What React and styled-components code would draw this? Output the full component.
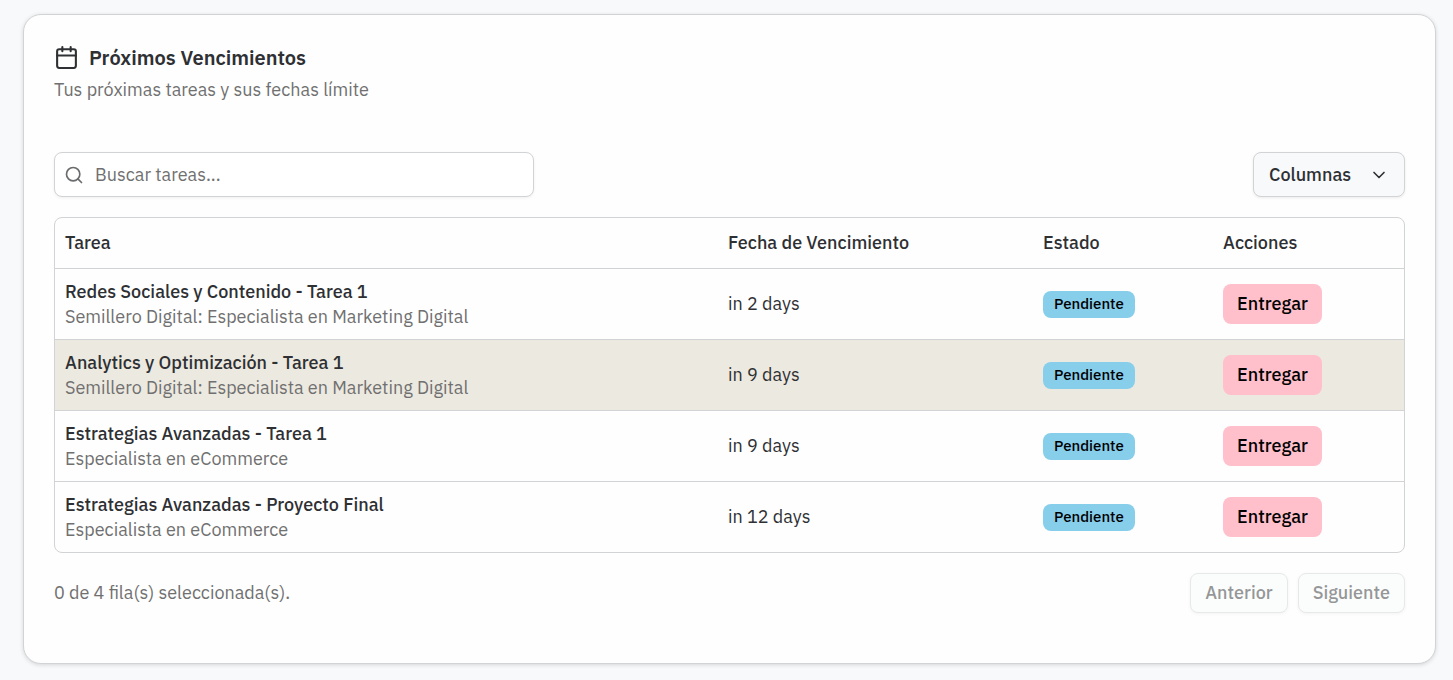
import React, { useState } from "react";
import styled, { createGlobalStyle, css } from "styled-components";
import { Calendar, ChevronDown, Search } from "lucide-react";

const GlobalStyle = createGlobalStyle`
  *, *::before, *::after { box-sizing: border-box; }
  body {
    margin: 0;
    background: #f8f9fb;
    color: #2e3033;
    font-family: "IBM Plex Sans", Roboto, "Liberation Sans", sans-serif;
    font-size: 18px;
    line-height: 24px;
  }
  button, input { font: inherit; color: inherit; }
`;

const Page = styled.main`
  padding: 14px 17px 16px 23px;
`;

const Card = styled.section`
  padding: 30px 30px 50px;
  background: #fefefe;
  border: 1px solid #d1d3d4;
  border-radius: 18px;
  box-shadow: 0 1px 4px rgba(0, 0, 0, 0.14);
`;

const CardHeader = styled.header`
  display: grid;
  gap: 8px;
  margin-bottom: 50px;
`;

const CardTitle = styled.h2`
  display: flex;
  align-items: center;
  gap: 10px;
  margin: 0;
  font-size: 20px;
  font-weight: 600;
`;

const Description = styled.p`
  margin: 0;
  color: #707070;
`;

const Toolbar = styled.div`
  display: flex;
  align-items: center;
  justify-content: space-between;
  gap: 20px;
  margin-bottom: 20px;
`;

const SearchField = styled.label`
  display: flex;
  align-items: center;
  gap: 11px;
  flex: 0 1 480px;
  height: 45px;
  padding: 0 10px 0 9px;
  background: #fff;
  color: #6a6b6d;
  border: 1px solid #d1d3d4;
  border-radius: 8px;
  box-shadow: 0 1px 3px rgba(0, 0, 0, 0.06);
`;

const SearchInput = styled.input`
  flex: 1;
  min-width: 0;
  padding: 0;
  border: 0;
  outline: none;
  background: transparent;
  color: #2e3033;
  &::placeholder { color: #707070; opacity: 1; }
`;

const Button = styled.button`
  display: inline-flex;
  align-items: center;
  justify-content: center;
  height: 40px;
  padding: 0 14px;
  border: 1px solid #d1d3d4;
  border-radius: 8px;
  background: #f8f9fb;
  box-shadow: 0 1px 3px rgba(0, 0, 0, 0.08);
  font-weight: 500;
  white-space: nowrap;
  &:disabled { opacity: 0.5; }
  ${({ $variant }) => $variant === "menu" && css`
    justify-content: space-between;
    width: 152px;
    height: 45px;
    padding: 0 15px;
  `}
  ${({ $variant }) => $variant === "submit" && css`
    width: 99px;
    padding: 0;
    border: 0;
    background: #ffc0cb;
    color: #000;
    box-shadow: none;
  `}
  ${({ $variant }) => $variant === "page" && css`
    background: #fafcfb;
  `}
`;

const TableFrame = styled.div`
  overflow: hidden;
  border: 1px solid #d1d3d4;
  border-radius: 8px;
`;

const Table = styled.table`
  width: 100%;
  table-layout: fixed;
  border-collapse: separate;
  border-spacing: 0;
`;

const Column = styled.col`
  width: ${({ $width }) => $width};
`;

const HeadCell = styled.th`
  height: 51px;
  padding: 0 10px;
  border-bottom: 1px solid #d1d3d4;
  text-align: left;
  font-weight: 500;
`;

const Row = styled.tr`
  background: ${({ $active }) => ($active ? "#ece9e0" : "transparent")};
  &:last-child td { border-bottom: 0; height: 70px; }
`;

const Cell = styled.td`
  height: 71px;
  padding: 0 10px;
  border-bottom: 1px solid #d1d3d4;
  vertical-align: middle;
`;

const TaskName = styled.div`
  font-weight: 500;
  line-height: 25px;
`;

const Course = styled.div`
  color: #707070;
  line-height: 25px;
`;

const Badge = styled.span`
  display: flex;
  align-items: center;
  justify-content: center;
  width: 92px;
  height: 27px;
  border-radius: 8px;
  background: #87ceeb;
  color: #000;
  font-size: 15px;
  font-weight: 500;
`;

const Footer = styled.footer`
  display: flex;
  align-items: center;
  justify-content: space-between;
  margin-top: 20px;
  color: #707070;
`;

const Pager = styled.nav`
  display: flex;
  gap: 10px;
  color: #2e3033;
`;

const tasks = [
  { name: "Redes Sociales y Contenido - Tarea 1", course: "Semillero Digital: Especialista en Marketing Digital", due: "in 2 days" },
  { name: "Analytics y Optimización - Tarea 1", course: "Semillero Digital: Especialista en Marketing Digital", due: "in 9 days", active: true },
  { name: "Estrategias Avanzadas - Tarea 1", course: "Especialista en eCommerce", due: "in 9 days" },
  { name: "Estrategias Avanzadas - Proyecto Final", course: "Especialista en eCommerce", due: "in 12 days" },
];

export default function App() {
  const [query, setQuery] = useState("");
  const visible = tasks.filter((t) => t.name.toLowerCase().includes(query.toLowerCase()));

  return (
    <>
      <GlobalStyle />
      <Page>
        <Card>
          <CardHeader>
            <CardTitle>
              <Calendar size={25} aria-hidden="true" />
              Próximos Vencimientos
            </CardTitle>
            <Description>Tus próximas tareas y sus fechas límite</Description>
          </CardHeader>
          <Toolbar>
            <SearchField htmlFor="task-search">
              <Search size={20} aria-hidden="true" />
              <SearchInput
                id="task-search"
                type="text"
                aria-label="Buscar tareas"
                placeholder="Buscar tareas..."
                value={query}
                onChange={(e) => setQuery(e.target.value)}
              />
            </SearchField>
            <Button type="button" $variant="menu" aria-haspopup="menu">
              Columnas
              <ChevronDown size={20} aria-hidden="true" />
            </Button>
          </Toolbar>
          <TableFrame>
            <Table>
              <colgroup>
                <Column $width="auto" />
                <Column $width="315px" />
                <Column $width="180px" />
                <Column $width="191px" />
              </colgroup>
              <thead>
                <tr>
                  <HeadCell scope="col">Tarea</HeadCell>
                  <HeadCell scope="col">Fecha de Vencimiento</HeadCell>
                  <HeadCell scope="col">Estado</HeadCell>
                  <HeadCell scope="col">Acciones</HeadCell>
                </tr>
              </thead>
              <tbody>
                {visible.map((task) => (
                  <Row key={task.name} $active={task.active}>
                    <Cell>
                      <TaskName>{task.name}</TaskName>
                      <Course>{task.course}</Course>
                    </Cell>
                    <Cell>{task.due}</Cell>
                    <Cell><Badge>Pendiente</Badge></Cell>
                    <Cell><Button type="button" $variant="submit">Entregar</Button></Cell>
                  </Row>
                ))}
              </tbody>
            </Table>
          </TableFrame>
          <Footer>
            <span>0 de 4 fila(s) seleccionada(s).</span>
            <Pager aria-label="Paginación">
              <Button type="button" $variant="page" disabled>Anterior</Button>
              <Button type="button" $variant="page" disabled>Siguiente</Button>
            </Pager>
          </Footer>
        </Card>
      </Page>
    </>
  );
}
